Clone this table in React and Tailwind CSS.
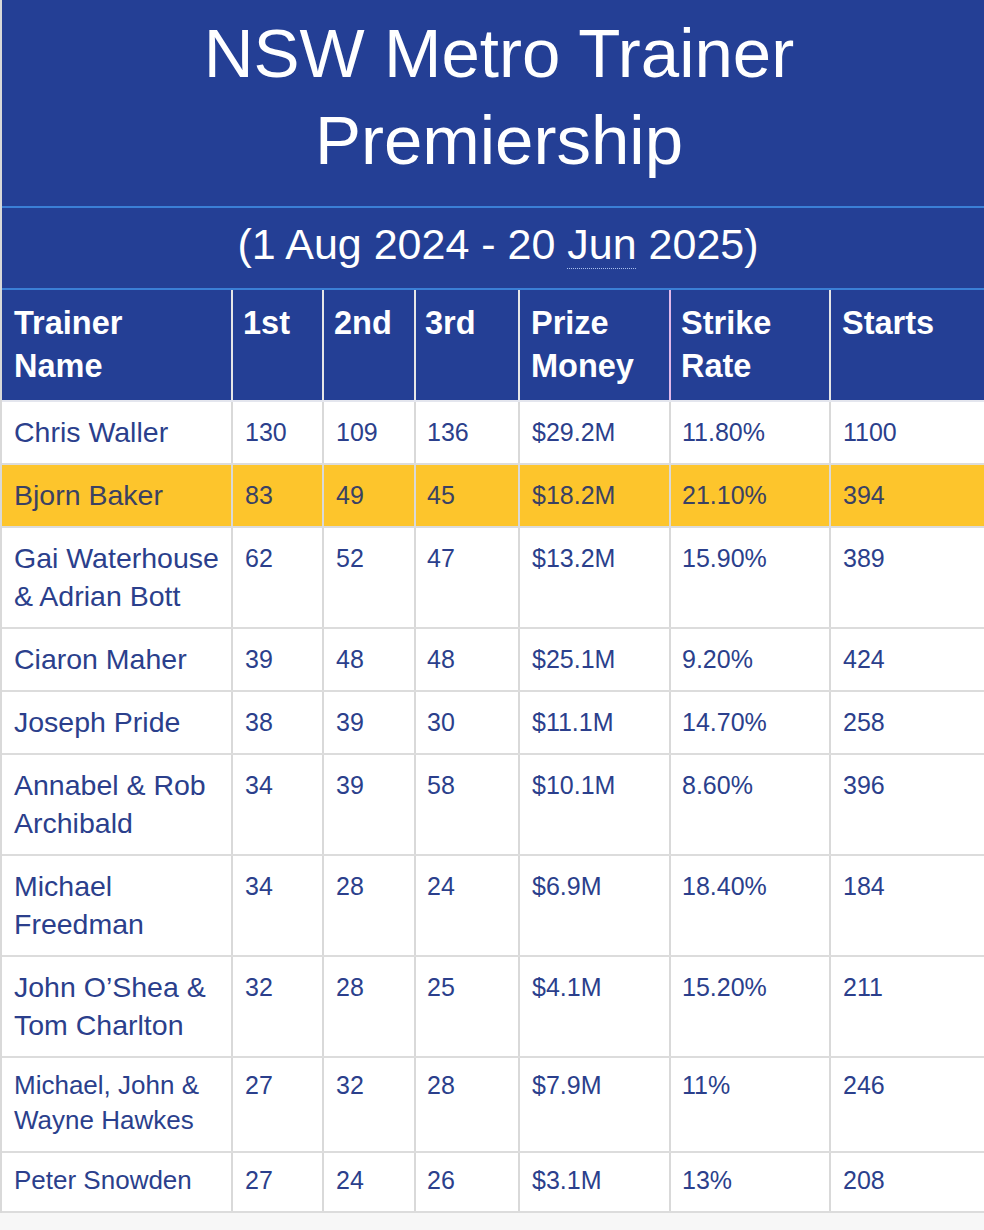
const trainers = [
  { name: "Chris Waller", first: 130, second: 109, third: 136, prize: "$29.2M", strike: "11.80%", starts: 1100 },
  { name: "Bjorn Baker", first: 83, second: 49, third: 45, prize: "$18.2M", strike: "21.10%", starts: 394, highlight: true },
  { name: ["Gai Waterhouse", "& Adrian Bott"], first: 62, second: 52, third: 47, prize: "$13.2M", strike: "15.90%", starts: 389 },
  { name: "Ciaron Maher", first: 39, second: 48, third: 48, prize: "$25.1M", strike: "9.20%", starts: 424 },
  { name: "Joseph Pride", first: 38, second: 39, third: 30, prize: "$11.1M", strike: "14.70%", starts: 258 },
  { name: ["Annabel & Rob", "Archibald"], first: 34, second: 39, third: 58, prize: "$10.1M", strike: "8.60%", starts: 396 },
  { name: ["Michael", "Freedman"], first: 34, second: 28, third: 24, prize: "$6.9M", strike: "18.40%", starts: 184 },
  { name: ["John O’Shea &", "Tom Charlton"], first: 32, second: 28, third: 25, prize: "$4.1M", strike: "15.20%", starts: 211 },
  { name: ["Michael, John &", "Wayne Hawkes"], first: 27, second: 32, third: 28, prize: "$7.9M", strike: "11%", starts: 246, small: true },
  { name: "Peter Snowden", first: 27, second: 24, third: 26, prize: "$3.1M", strike: "13%", starts: 208, small: true },
];

const cols = "grid grid-cols-[231px_91px_92px_104px_151px_160px_1fr]";

const Row = ({ t }) => {
  const pad = t.small ? "pt-[10px] pb-[13px]" : "pt-[11px] pb-3";
  const lead = t.small ? "leading-[35px]" : "leading-[38px]";
  const name = Array.isArray(t.name) ? t.name : [t.name];
  const cell = `${pad} ${lead} border-r-2 border-[#d9d9d9] text-[25px]`;
  return (
    <div
      className={`${cols} border-b-2 border-[#dcdcdc] ${
        t.highlight ? "bg-[#fdc52c] text-[#3a4163]" : "bg-white text-[#2b3f8c]"
      }`}
    >
      <div className={`${pad} ${lead} px-3 border-r-2 border-[#d9d9d9] ${t.small ? "text-[26px]" : "text-[28.5px]"}`}>
        {name.map((n) => (
          <div key={n}>{n}</div>
        ))}
      </div>
      <div className={`${cell} pl-[12px]`}>{t.first}</div>
      <div className={`${cell} pl-[12px]`}>{t.second}</div>
      <div className={`${cell} pl-[11px]`}>{t.third}</div>
      <div className={`${cell} pl-[12px]`}>{t.prize}</div>
      <div className={`${cell} pl-[11px]`}>{t.strike}</div>
      <div className={`${pad} ${lead} pl-[12px] text-[25px]`}>{t.starts}</div>
    </div>
  );
};

const App = () => {
  return (
    <div className="min-h-[1230px] bg-[#f7f7f7] font-['Liberation_Sans',Arial,sans-serif]">
      <div className="border-l-2 border-[#d9d9d9]">
        <div className="bg-[#243f95] text-white text-center text-[69px] leading-[87px] pt-[10px] pb-[22px] pl-[12px]">
          <div>NSW Metro Trainer</div>
          <div>Premiership</div>
        </div>
        <div className="h-[2px] bg-[#3b7fd6]" />
        <div className="bg-[#243f95] text-white text-center text-[43px] leading-[72px] pb-2 pl-[10px]">
          (1 Aug 2024 - 20{" "}
          <span className="underline decoration-dotted decoration-1 decoration-[#a9c0ee] underline-offset-[9px]">
            Jun
          </span>{" "}
          2025)
        </div>
        <div className="h-[2px] bg-[#3b7fd6]" />
        <div className={`${cols} bg-[#243f95] text-white font-bold text-[32.5px] leading-[43px] border-b-2 border-[#e4e6ee]`}>
          <div className="px-3 py-3 border-r-2 border-[#e6e6e6]">
            <div>Trainer</div>
            <div>Name</div>
          </div>
          <div className="pl-[10px] py-3 border-r-2 border-[#e6e6e6]">1st</div>
          <div className="pl-[10px] py-3 border-r-2 border-[#e6e6e6]">2nd</div>
          <div className="pl-[9px] py-3 border-r-2 border-[#e6e6e6]">3rd</div>
          <div className="pl-[11px] py-3 border-r-2 border-[#e2b8ea]">
            <div>Prize</div>
            <div>Money</div>
          </div>
          <div className="pl-[10px] py-3 border-r-2 border-[#e6e6e6]">
            <div>Strike</div>
            <div>Rate</div>
          </div>
          <div className="pl-[11px] py-3">Starts</div>
        </div>
        {trainers.map((t, i) => (
          <Row key={i} t={t} />
        ))}
      </div>
    </div>
  );
};

export default App;
